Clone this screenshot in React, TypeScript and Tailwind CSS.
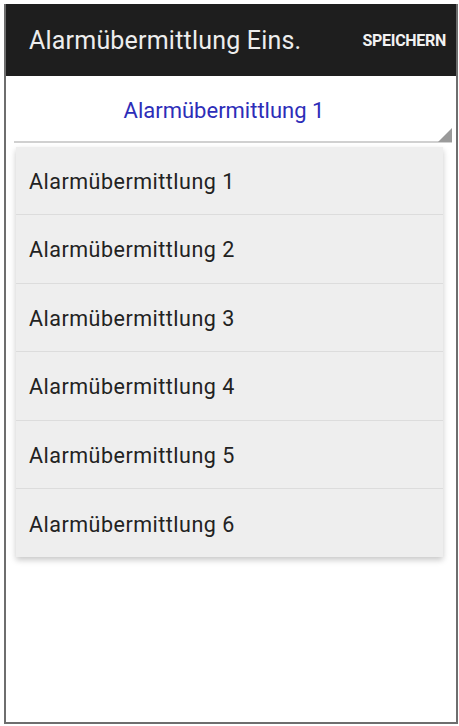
import React from "react";

const items = [1, 2, 3, 4, 5, 6].map((n) => `Alarmübermittlung ${n}`);

export default function App() {
  return (
    <div
      className="w-[459px] h-[726px] bg-white pt-[4px] pl-[4px] pr-[1px] pb-[2px]"
      style={{ fontFamily: "Roboto, 'Noto Sans', sans-serif" }}
    >
      <div className="h-[720px] border-2 border-t-0 border-[#6e6e6e] flex flex-col bg-white">
        {/* toolbar */}
        <div className="h-[72px] bg-[#1e1e1e] flex items-center justify-between pl-[23px] pr-[10px]">
          <span className="text-[25px] text-[#ededed] tracking-[0.2px] mt-[2px]">Alarmübermittlung Eins.</span>
          <span className="text-[16px] font-bold text-[#f2f2f2] tracking-[-0.3px] mt-[2px]">SPEICHERN</span>
        </div>
        {/* spinner */}
        <div className="relative h-[67px] mx-[4px] flex items-center justify-center">
          <span className="text-[22px] text-[#2d2db8] mt-[2px] ml-[-14px]">Alarmübermittlung 1</span>
          <div className="absolute left-[4px] right-0 bottom-[0px] h-[2px] bg-[#d0d0d0]" />
          <svg className="absolute right-[0px] bottom-[1px]" width="14" height="14" viewBox="0 0 14 14">
            <polygon points="14,0 14,14 0,14" fill="#9a9a9a" />
          </svg>
        </div>
        {/* dropdown list */}
        <div className="mx-[10px] mt-[4px] w-[427px] bg-[#eeeeee] shadow-[0_3px_6px_rgba(0,0,0,0.22)]">
          {items.map((t, i) => (
            <div
              key={t}
              className={`h-[68.4px] flex items-center pl-[13px] pt-[3px] text-[21.5px] tracking-[0.5px] text-[#222222] ${
                i < items.length - 1 ? "border-b border-[#dcdcdc]" : ""
              }`}
            >
              {t}
            </div>
          ))}
        </div>
      </div>
    </div>
  );
}
